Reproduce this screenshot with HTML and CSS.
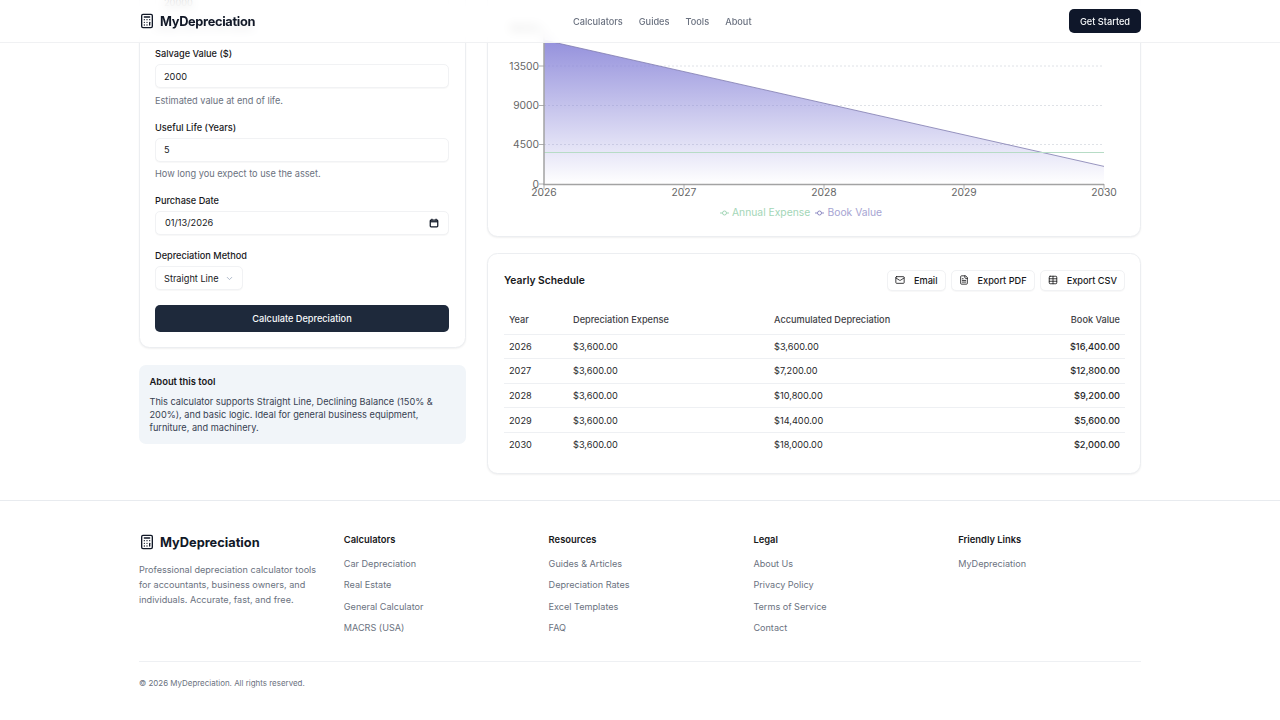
FILE: index.html
```html
<!DOCTYPE html>
<html lang="en">

<head>
    <meta charset="UTF-8">
    <meta name="viewport" content="width=device-width, initial-scale=1.0">
    <title>MyDepreciation</title>
    <link rel="stylesheet" href="styles.css">
</head>

<body>
    <header class="site-header">
        <div class="header-inner">
            <a href="#" class="logo">
                <svg class="logo-icon" viewBox="0 0 24 24" fill="none" stroke="currentColor" stroke-width="2" stroke-linecap="round" stroke-linejoin="round">
                    <rect x="4" y="2" width="16" height="20" rx="2"></rect>
                    <line x1="8" y1="6" x2="16" y2="6"></line>
                    <line x1="16" y1="14" x2="16" y2="18"></line>
                    <path d="M16 10h.01M12 10h.01M8 10h.01M12 14h.01M8 14h.01M12 18h.01M8 18h.01"></path>
                </svg>
                <span>MyDepreciation</span>
            </a>
            <nav class="main-nav">
                <a href="#">Calculators</a>
                <a href="#">Guides</a>
                <a href="#">Tools</a>
                <a href="#">About</a>
            </nav>
            <a href="#" class="btn-start">Get Started</a>
        </div>
    </header>

    <main class="layout">
        <div class="left-col">
            <section class="card form-card">
                <div class="field">
                    <label>Asset Cost ($)</label>
                    <input type="text" value="20000">
                    <p class="hint">Initial cost of the asset.</p>
                </div>
                <div class="field">
                    <label>Salvage Value ($)</label>
                    <input type="text" value="2000">
                    <p class="hint">Estimated value at end of life.</p>
                </div>
                <div class="field">
                    <label>Useful Life (Years)</label>
                    <input type="text" value="5">
                    <p class="hint">How long you expect to use the asset.</p>
                </div>
                <div class="field field-date">
                    <label>Purchase Date</label>
                    <div class="date-input">
                        <span>01/13/2026</span>
                        <svg class="cal-icon" viewBox="0 0 24 24" fill="none" stroke="currentColor" stroke-width="3">
                            <rect x="3" y="5" width="18" height="16" rx="2"></rect>
                            <line x1="3" y1="9" x2="21" y2="9"></line>
                            <line x1="7" y1="2" x2="7" y2="6"></line>
                            <line x1="17" y1="2" x2="17" y2="6"></line>
                        </svg>
                    </div>
                </div>
                <div class="field">
                    <label>Depreciation Method</label>
                    <div class="select-box">
                        <span>Straight Line</span>
                        <svg class="chevron" viewBox="0 0 24 24" fill="none" stroke="currentColor" stroke-width="2" stroke-linecap="round" stroke-linejoin="round">
                            <path d="m6 9 6 6 6-6"></path>
                        </svg>
                    </div>
                </div>
                <button class="btn-calc">Calculate Depreciation</button>
            </section>

            <section class="about-box">
                <h4>About this tool</h4>
                <p>This calculator supports Straight Line, Declining Balance (150% &amp; 200%), and basic logic. Ideal for general business equipment, furniture, and machinery.</p>
            </section>
        </div>

        <div class="right-col">
            <section class="card chart-card">
                <svg class="chart" viewBox="0 0 654 236" width="654" height="236">
                    <defs>
                        <linearGradient id="bookFill" x1="0" y1="0" x2="0" y2="1">
                            <stop offset="0%" stop-color="#8884d8" stop-opacity="0.9"></stop>
                            <stop offset="100%" stop-color="#8884d8" stop-opacity="0"></stop>
                        </linearGradient>
                    </defs>
                    <text class="tick tick-y" x="52" y="32">18000</text>
                    <line class="grid" x1="57" y1="66" x2="617" y2="66"></line>
                    <line class="grid" x1="57" y1="105.500" x2="617" y2="105.500"></line>
                    <line class="grid" x1="57" y1="144.500" x2="617" y2="144.500"></line>
                    <path d="M57 40L57 184L617 184L617 166.400Z" fill="url(#bookFill)"></path>
                    <line class="line-book" x1="57" y1="40" x2="617" y2="166.400"></line>
                    <line class="line-expense" x1="57" y1="152.500" x2="617" y2="152.500"></line>
                    <path class="axis" d="M57 27V184.500H617"></path>
                    <path class="axis-tick" d="M52 66h5M52 105.500h5M52 144.500h5M52 184h5M57 184v5M197 184v5M337 184v5M477 184v5M617 184v5"></path>
                    <text class="tick tick-y" x="52" y="70">13500</text>
                    <text class="tick tick-y" x="52" y="109">9000</text>
                    <text class="tick tick-y" x="52" y="148">4500</text>
                    <text class="tick tick-y" x="52" y="188">0</text>
                    <text class="tick tick-x" x="57" y="196">2026</text>
                    <text class="tick tick-x" x="197" y="196">2027</text>
                    <text class="tick tick-x" x="337" y="196">2028</text>
                    <text class="tick tick-x" x="477" y="196">2029</text>
                    <text class="tick tick-x" x="617" y="196">2030</text>
                    <path class="legend-line-green" d="M233 213h9"></path>
                    <circle class="legend-dot-green" cx="237.500" cy="213" r="2"></circle>
                    <text class="legend legend-green" x="245" y="216">Annual Expense</text>
                    <path class="legend-line-purple" d="M328 213h9"></path>
                    <circle class="legend-dot-purple" cx="332.500" cy="213" r="2"></circle>
                    <text class="legend legend-purple" x="340.500" y="216">Book Value</text>
                </svg>
            </section>

            <section class="card schedule-card">
                <div class="schedule-head">
                    <h3>Yearly Schedule</h3>
                    <div class="schedule-actions">
                        <button class="btn-outline">
                            <svg viewBox="0 0 24 24" fill="none" stroke="currentColor" stroke-width="2" stroke-linecap="round" stroke-linejoin="round">
                                <rect x="2" y="4" width="20" height="16" rx="2"></rect>
                                <path d="m22 7-8.970 5.700a1.940 1.940 0 0 1-2.060 0L2 7"></path>
                            </svg>
                            Email
                        </button>
                        <button class="btn-outline">
                            <svg viewBox="0 0 24 24" fill="none" stroke="currentColor" stroke-width="2" stroke-linecap="round" stroke-linejoin="round">
                                <path d="M15 2H6a2 2 0 0 0-2 2v16a2 2 0 0 0 2 2h12a2 2 0 0 0 2-2V7Z"></path>
                                <path d="M14 2v4a2 2 0 0 0 2 2h4M10 9H8M16 13H8M16 17H8"></path>
                            </svg>
                            Export PDF
                        </button>
                        <button class="btn-outline">
                            <svg viewBox="0 0 24 24" fill="none" stroke="currentColor" stroke-width="2" stroke-linecap="round" stroke-linejoin="round">
                                <rect x="3" y="3" width="18" height="18" rx="2"></rect>
                                <path d="M12 3v18M3 9h18M3 15h18"></path>
                            </svg>
                            Export CSV
                        </button>
                    </div>
                </div>
                <table class="schedule-table">
                    <thead>
                        <tr>
                            <th class="col-year">Year</th>
                            <th class="col-exp">Depreciation Expense</th>
                            <th>Accumulated Depreciation</th>
                            <th class="num">Book Value</th>
                        </tr>
                    </thead>
                    <tbody>
                        <tr><td>2026</td><td>$3,600.00</td><td>$3,600.00</td><td class="num strong">$16,400.00</td></tr>
                        <tr><td>2027</td><td>$3,600.00</td><td>$7,200.00</td><td class="num strong">$12,800.00</td></tr>
                        <tr><td>2028</td><td>$3,600.00</td><td>$10,800.00</td><td class="num strong">$9,200.00</td></tr>
                        <tr><td>2029</td><td>$3,600.00</td><td>$14,400.00</td><td class="num strong">$5,600.00</td></tr>
                        <tr><td>2030</td><td>$3,600.00</td><td>$18,000.00</td><td class="num strong">$2,000.00</td></tr>
                    </tbody>
                </table>
            </section>
        </div>
    </main>

    <footer class="site-footer">
        <div class="footer-inner">
            <div class="footer-cols">
                <div class="footer-brand">
                    <a href="#" class="logo logo-footer">
                        <svg class="logo-icon" viewBox="0 0 24 24" fill="none" stroke="currentColor" stroke-width="2" stroke-linecap="round" stroke-linejoin="round">
                            <rect x="4" y="2" width="16" height="20" rx="2"></rect>
                            <line x1="8" y1="6" x2="16" y2="6"></line>
                            <line x1="16" y1="14" x2="16" y2="18"></line>
                            <path d="M16 10h.01M12 10h.01M8 10h.01M12 14h.01M8 14h.01M12 18h.01M8 18h.01"></path>
                        </svg>
                        <span>MyDepreciation</span>
                    </a>
                    <p>Professional depreciation calculator tools for accountants, business owners, and individuals. Accurate, fast, and free.</p>
                </div>
                <div class="footer-col">
                    <h4>Calculators</h4>
                    <a href="#">Car Depreciation</a>
                    <a href="#">Real Estate</a>
                    <a href="#">General Calculator</a>
                    <a href="#">MACRS (USA)</a>
                </div>
                <div class="footer-col">
                    <h4>Resources</h4>
                    <a href="#">Guides &amp; Articles</a>
                    <a href="#">Depreciation Rates</a>
                    <a href="#">Excel Templates</a>
                    <a href="#">FAQ</a>
                </div>
                <div class="footer-col">
                    <h4>Legal</h4>
                    <a href="#">About Us</a>
                    <a href="#">Privacy Policy</a>
                    <a href="#">Terms of Service</a>
                    <a href="#">Contact</a>
                </div>
                <div class="footer-col">
                    <h4>Friendly Links</h4>
                    <a href="#">MyDepreciation</a>
                </div>
            </div>
            <div class="footer-bottom">© 2026 MyDepreciation. All rights reserved.</div>
        </div>
    </footer>
</body>

</html>
```

FILE: styles.css
```css
* {
    margin: 0;
    padding: 0;
    box-sizing: border-box;
}

html,
body {
    height: 720px;
    overflow: hidden;
}

body {
    font-family: Inter, 'Liberation Sans', sans-serif;
    background: #fff;
    color: #18181b;
    font-size: 9.2px;
}

a {
    color: inherit;
    text-decoration: none;
}

/* header floats over the scrolled page */
.site-header {
    position: fixed;
    top: 0;
    left: 0;
    right: 0;
    height: 43px;
    background: rgba(255, 255, 255, 0.8);
    backdrop-filter: blur(5px);
    border-bottom: 1px solid #f0f1f3;
    z-index: 10;
}

.header-inner {
    width: 1002px;
    height: 100%;
    margin: 0 auto;
    display: flex;
    align-items: center;
}

.logo {
    display: flex;
    align-items: center;
    gap: 5px;
    font-size: 12.800px;
    font-weight: 700;
    letter-spacing: -0.320px;
    color: #111827;
    width: 434px;
}

.logo-icon {
    width: 16px;
    height: 16px;
    flex-shrink: 0;
}

.main-nav {
    display: flex;
    gap: 16px;
    flex: 1;
    font-size: 9.2px;
    font-weight: 500;
    color: #6b7280;
}

.btn-start {
    background: #0f172a;
    color: #f8fafc;
    height: 24px;
    width: 72px;
    border-radius: 5px;
    display: flex;
    align-items: center;
    justify-content: center;
    font-size: 9.2px;
    font-weight: 500;
}

.layout {
    width: 1002px;
    margin: -42px auto 0;
    display: flex;
    gap: 21px;
    align-items: flex-start;
}

.left-col {
    width: 327px;
    flex-shrink: 0;
}

.right-col {
    width: 654px;
    display: flex;
    flex-direction: column;
    gap: 16px;
}

.card {
    background: #fff;
    border: 1px solid #eceef1;
    border-radius: 10.5px;
    box-shadow: 0 1px 2px rgba(0, 0, 0, 0.06);
}

.form-card {
    padding: 15px 16px 15px 15px;
}

.field {
    margin-bottom: 13px;
}

.field-date {
    margin-bottom: 14.500px;
}

.field label {
    display: block;
    font-size: 9.2px;
    font-weight: 500;
    line-height: 14px;
    margin-bottom: 2.800px;
}

.field input,
.date-input,
.select-box {
    height: 24px;
    border: 1px solid #f1f2f4;
    border-radius: 5px;
    box-shadow: 0 1px 1px rgba(0, 0, 0, 0.03);
    background: #fff;
    font-family: inherit;
    font-size: 9.2px;
    color: #18181b;
}

.field input {
    display: block;
    width: 100%;
    padding: 0 8px;
}

.hint {
    font-size: 9.2px;
    line-height: 14px;
    color: #6b7280;
    margin-top: 5.600px;
}

.date-input {
    display: flex;
    align-items: center;
    justify-content: space-between;
    padding: 0 9px;
}

.cal-icon {
    width: 10px;
    height: 10px;
    color: #111827;
}

.select-box {
    display: inline-flex;
    align-items: center;
    justify-content: space-between;
    width: 88px;
    padding: 0 8px;
    vertical-align: top;
}

.chevron {
    width: 9px;
    height: 9px;
    color: #94a3b8;
}

.btn-calc {
    display: block;
    width: 100%;
    height: 27px;
    margin-top: 15px;
    border: 0;
    border-radius: 5px;
    background: #1e293b;
    color: #f8fafc;
    font-family: inherit;
    font-size: 9.2px;
    font-weight: 500;
}

.about-box {
    margin-top: 16.500px;
    padding: 10px 10.5px;
    background: #f1f5f9;
    border-radius: 7px;
    height: 79.500px;
}

.about-box h4 {
    font-size: 9.4px;
    font-weight: 600;
    line-height: 14px;
    margin-bottom: 5.800px;
}

.about-box p {
    font-size: 9.2px;
    line-height: 13.300px;
    color: #374151;
}

.chart-card {
    height: 279px;
    padding-top: 41px;
}

.chart {
    display: block;
    margin-left: -1px;
}

.chart text {
    font-family: Inter, 'Liberation Sans', sans-serif;
    font-size: 10.3px;
}

.tick {
    fill: #666;
}

.tick-y {
    text-anchor: end;
}

.tick-x {
    text-anchor: middle;
}

.grid {
    stroke: #dfe2e7;
    stroke-width: 1;
    stroke-dasharray: 2 2;
}

.line-book {
    stroke: #7f7baf;
    stroke-width: 0.800;
}

.line-expense {
    stroke: #b7dcc6;
    stroke-width: 1;
}

.axis {
    fill: none;
    stroke: #a3a3a3;
    stroke-width: 1.500;
}

.axis-tick {
    fill: none;
    stroke: #999;
    stroke-width: 0.800;
}

.legend-green {
    fill: #a3d6b7;
}

.legend-purple {
    fill: #a6a4d2;
}

.legend-line-green,
.legend-dot-green {
    stroke: #a3d6b7;
    fill: #fff;
}

.legend-line-purple,
.legend-dot-purple {
    stroke: #8f8cc4;
    fill: #fff;
}

.schedule-card {
    padding: 15px 15px 15px 16px;
    height: 221px;
}

.schedule-head {
    display: flex;
    justify-content: space-between;
    align-items: center;
    height: 22px;
    margin-bottom: 14px;
}

.schedule-head h3 {
    font-size: 10.3px;
    font-weight: 600;
}

.schedule-actions {
    display: flex;
    gap: 5px;
}

.btn-outline {
    display: flex;
    align-items: center;
    gap: 9px;
    height: 21px;
    padding: 0 7px;
    background: #fff;
    border: 1px solid #f1f2f4;
    border-radius: 5px;
    box-shadow: 0 1px 1px rgba(0, 0, 0, 0.03);
    font-family: inherit;
    font-size: 9.2px;
    font-weight: 500;
    color: #18181b;
}

.btn-outline svg {
    width: 10px;
    height: 10px;
}

.schedule-table {
    width: 100%;
    border-collapse: collapse;
    font-size: 9.2px;
}

.schedule-table th {
    height: 29px;
    padding: 0 5px;
    text-align: left;
    font-weight: 500;
    color: #3f3f46;
}

.schedule-table td {
    height: 24.600px;
    padding: 0 5px;
    color: #27272a;
}

.schedule-table tr {
    border-bottom: 1px solid #eef0f3;
}

.schedule-table tbody tr:last-child {
    border-bottom: 0;
}

.col-year {
    width: 64px;
}

.col-exp {
    width: 201px;
}

.schedule-table .num {
    text-align: right;
}

.strong {
    font-weight: 500;
}

.site-footer {
    margin-top: 26px;
    border-top: 1px solid #e8ebef;
}

.footer-inner {
    width: 1002px;
    margin: 0 auto;
    padding-top: 32px;
}

.footer-cols {
    display: grid;
    grid-template-columns: repeat(4, 204.800px) 1fr;
    height: 128px;
    font-size: 9.100px;
}

.footer-brand {
    padding: 1px 25px 0 0;
}

.logo-footer {
    margin-bottom: 12px;
    width: auto;
    letter-spacing: 0;
}

.footer-brand p {
    color: #6b7280;
    line-height: 15px;
}

.footer-col {
    display: flex;
    flex-direction: column;
    gap: 7px;
    color: #6b7280;
}

.footer-col a {
    line-height: 14.300px;
}

.footer-col h4 {
    font-size: 9.4px;
    font-weight: 600;
    line-height: 14px;
    color: #18181b;
    margin-bottom: 3px;
}

.footer-bottom {
    border-top: 1px solid #eef0f3;
    padding-top: 16px;
    font-size: 7.950px;
    color: #6b7280;
}
```
